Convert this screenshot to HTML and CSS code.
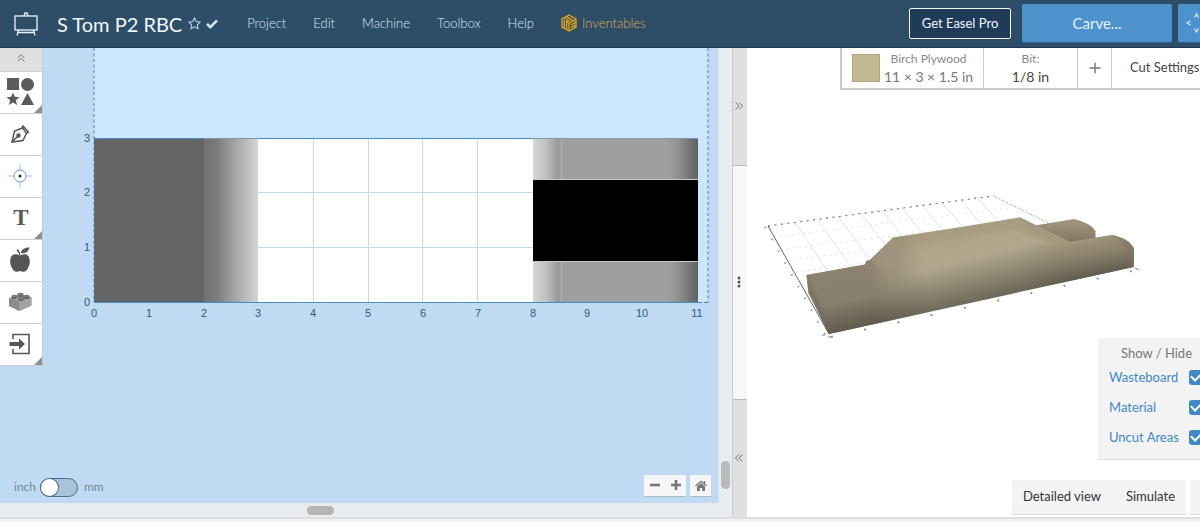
FILE: index.html
```html
<!DOCTYPE html>
<html lang="en">
<head>
<meta charset="utf-8">
<title>S Tom P2 RBC</title>
<link rel="stylesheet" href="styles.css">
</head>
<body>
<div class="app">
  <header class="topbar">
    <svg class="logo" viewBox="0 0 26 26" width="26" height="26" fill="none" stroke="#e8f4fc" stroke-width="1.3"><rect x="2" y="5" width="22" height="14"/><path d="M11 5l1-3h2l1 3M5.500 19L4 24.500M20.500 19l1.500 5.500M4.500 21.500h17"/></svg>
    <h1 class="title">S Tom P2 RBC</h1>
    <button class="icon-btn star" aria-label="Favorite"><svg viewBox="0 0 12 12" width="13" height="13" fill="none" stroke="#b9d3e8"><path d="M6 .9l1.600 3.300 3.600.5-2.600 2.500.6 3.600L6 9.100l-3.200 1.700.6-3.600L.8 4.700l3.600-.5z"/></svg></button>
    <svg class="saved" viewBox="0 0 12 10" width="12" height="10" fill="none" stroke="#d3e6f5" stroke-width="2.600"><path d="M1 4.800l3.300 3.300L11 1.300"/></svg>
    <nav class="menu">
      <button>Project</button><button>Edit</button><button>Machine</button><button>Toolbox</button><button>Help</button>
      <a href="#" class="brand"><svg viewBox="0 0 16 18" width="16" height="18" fill="none" stroke="#e0a21b" stroke-width="1.400"><path d="M8 1l7 4v8l-7 4-7-4V5zM8 9.500V17M8 9.500l7-4M3.300 6v7.500M5.600 6.500V15M8 9.500L5.600 6.500M3.300 4l6.500 3.500M5.600 2.600l6.500 3.700M10 11l5-2.800M10 13.600l5-2.800M8 17l7-4"/></svg>Inventables</a>
    </nav>
    <div class="actions">
      <button class="pro">Get Easel Pro</button>
      <button class="carve">Carve...</button>
      <button class="jog" aria-label="Jog machine"><svg viewBox="0 0 24 24" width="24" height="24" fill="none" stroke="#d8ecfb" stroke-width="1.200"><path d="M4.500 10L1 12l3.500 2M8.500 6.500l2-3.500 2 3.500M8.500 17.500l2 3.500 2-3.500M17 10l3.500 2-3.500 2"/></svg></button>
    </div>
  </header>
  <main class="panes">
    <section class="editor">
      <div class="canvas">
        <svg class="drawing" viewBox="0 48 718 455">
          <defs>
            <linearGradient id="ramp"><stop offset="0" stop-color="#707070"/><stop offset=".25" stop-color="#7d7d7d"/><stop offset=".5" stop-color="#9c9c9c"/><stop offset="1" stop-color="#d5d5d5"/></linearGradient>
            <linearGradient id="hood"><stop offset="0" stop-color="#d5d7d6"/><stop offset=".5" stop-color="#bdbfbe"/><stop offset=".9" stop-color="#969796"/><stop offset="1" stop-color="#a0a0a0"/></linearGradient>
            <linearGradient id="tail"><stop offset="0" stop-color="#9f9f9f"/><stop offset=".4" stop-color="#8b8c8a"/><stop offset="1" stop-color="#60625f"/></linearGradient>
          </defs>
          <rect x="94" y="48" width="614" height="254" fill="#cce6ff"/>
          <path d="M94 48v254M708 48v254" stroke="#6d9dc4" stroke-width="1.400" stroke-dasharray="3 2.500"/>
          <path d="M698 302.500h10" stroke="#4585b8" stroke-dasharray="4 2"/>
          <rect x="94" y="138" width="604" height="164" fill="#fff"/>
          <path d="M313.500 138v164M368.500 138v164M422.500 138v164M477.500 138v164M258 192.500h275M258 247.500h275" stroke="#c3dbec"/>
          <rect x="94" y="138" width="110" height="164" fill="#646464"/>
          <rect x="204" y="138" width="54" height="164" fill="url(#ramp)"/>
          <rect x="533" y="138" width="165" height="164" fill="#9f9f9f"/>
          <rect x="533" y="138" width="28" height="164" fill="url(#hood)"/>
          <path d="M561.500 138v164" stroke="#b3b3b3"/>
          <rect x="669" y="138" width="29" height="164" fill="url(#tail)"/>
          <path d="M533 179.500h165M533 261.500h165" stroke="#c9c9c9"/>
          <rect x="533" y="180" width="165" height="81"/>
          <path d="M94 138.500h110M258 138.500h275M94 302.500h604" stroke="#4e8cbd"/>
          <path d="M204 138.500h54M533 138.500h165" stroke="#8298a8"/>
          <path d="M94.500 138v164" stroke="#4a79a0" opacity=".7"/>
          <g class="ruler" text-anchor="end"><text x="90" y="142">3</text><text x="90" y="196">2</text><text x="90" y="251">1</text><text x="90" y="306">0</text></g>
          <g class="ruler" text-anchor="middle"><text x="94" y="317">0</text><text x="149" y="317">1</text><text x="204" y="317">2</text><text x="258" y="317">3</text><text x="313" y="317">4</text><text x="368" y="317">5</text><text x="423" y="317">6</text><text x="478" y="317">7</text><text x="533" y="317">8</text><text x="587" y="317">9</text><text x="642" y="317">10</text><text x="697" y="317">11</text></g>
        </svg>
        <div class="toolbar">
          <button class="collapse" aria-label="Collapse tools"><svg viewBox="0 0 8 8" width="8" height="8" fill="none" stroke="#777"><path d="M.5 4L4 .7 7.500 4M.5 7.500L4 4.200l3.500 3.300"/></svg></button>
          <button class="tool more" aria-label="Shapes"><svg viewBox="0 0 28 28" width="28" height="28" fill="#5a5a5a"><path d="M1 0h12v12H1z"/><circle cx="21.500" cy="6.500" r="6.500"/><path d="M7 14.500l1.900 4.300 4.600.4-3.600 3.100 1.200 4.700L7 24.400 2.900 27l1.200-4.700L.5 19.200l4.600-.4zM21.500 15L28 27H15z"/></svg></button>
          <button class="tool" aria-label="Pen"><svg viewBox="0 0 20 20" width="20" height="20" fill="none" stroke="#555" stroke-width="1.500"><path d="M2 18L4.500 7l8-3 4 5-3.500 7.500zM11.500 4.500L13 2l5.500 6-2.500 1.500M2.500 17.500L8 12"/><circle cx="8.500" cy="11.500" r="1.500" fill="#555"/></svg></button>
          <button class="tool" aria-label="Drill point"><svg viewBox="0 0 24 24" width="24" height="24" fill="none" stroke="#5d9bd3"><path d="M12 0v6M12 18v6M0 12h6M18 12h6" stroke="#a5c9e8"/><circle cx="12" cy="12" r="6"/><circle cx="12" cy="12" r="1.500" fill="#222" stroke="none"/></svg></button>
          <button class="tool more letter">T</button>
          <button class="tool" aria-label="Icon library"><svg viewBox="0 0 22 26" width="22" height="26" fill="#555"><path d="M10.500 8.500C8 7 5 6.800 3 8.800.5 11.500.7 17 3 21c2 4 4.500 4.500 8 3 3.500 1.500 6 1 8-3 2.300-4 2.500-9.500 0-12.200-2-2-5-1.800-7.500-.3L11 5.500 9 2 7.500 3l2 3z"/><path d="M12 6c0-3 3-5.500 8.500-5.500C19.500 4.500 16.500 7 12 6z"/></svg></button>
          <button class="tool" aria-label="Apps"><svg viewBox="0 0 24 20" width="24" height="20"><path d="M1 6l12-3.500L23.500 5v8.500L11.500 19 1 14z" fill="#b0b0b0"/><path d="M1 6l10.500 3V19L1 14z" fill="#8b8b8b"/><path d="M11.500 9l12-4v8.500l-12 5.500z" fill="#a3a3a3"/><g fill="#666"><path d="M3.500 4v1.500a3 1.500 0 006 0V4zM9.500 2v1.500a3 1.500 0 006 0V2zM10 6v1.200a3 1.500 0 006 0V6zM15.500 4v1.500a3 1.500 0 006 0V4z"/></g><g fill="#7b7b7b"><ellipse cx="6.500" cy="4" rx="3" ry="1.200"/><ellipse cx="12.500" cy="2" rx="3" ry="1.200"/><ellipse cx="13" cy="6" rx="3" ry="1.200"/><ellipse cx="18.500" cy="4" rx="3" ry="1.200"/></g></svg></button>
          <button class="tool more" aria-label="Import"><svg viewBox="0 0 22 22" width="22" height="22" fill="none" stroke="#555" stroke-width="1.600"><path d="M4 6V1.500h16v19H4V16"/><path d="M.5 9H10V5.500l6 5.500-6 5.500V13H.5z" fill="#555" stroke="none"/></svg></button>
        </div>
        <label class="units"><span>inch</span><input type="checkbox" role="switch"><span>mm</span></label>
        <div class="zoom">
          <div class="zoom-group">
            <button aria-label="Zoom out"><svg viewBox="0 0 12 12" width="12" height="12"><path d="M1 6h10" stroke="#777" stroke-width="2.600"/></svg></button>
            <button aria-label="Zoom in"><svg viewBox="0 0 12 12" width="12" height="12"><path d="M1 6h10M6 1v10" stroke="#777" stroke-width="2.600"/></svg></button>
          </div>
          <button class="home" aria-label="Reset view"><svg viewBox="0 0 12 11" width="12" height="11"><path d="M.5 6L6 1.300 11.500 6M9.500 1v3" fill="none" stroke="#777" stroke-width="1.400"/><path d="M2 6.500L6 3l4 3.500V11H7.200V8H4.800v3H2z" fill="#777"/></svg></button>
        </div>
      </div>
      <div class="vscroll"><span class="vthumb"></span></div>
      <div class="hscroll"><span class="hthumb"></span></div>
    </section>
    <div class="divider">
      <button class="side" aria-label="Expand editor"><svg viewBox="0 0 8 8" width="8" height="8" fill="none" stroke="#777"><path d="M.7.5L4 4 .7 7.500M4.200.5L7.500 4 4.200 7.500"/></svg></button>
      <button class="grip" aria-label="Resize panes"><svg viewBox="0 0 4 12" width="4" height="12" fill="#555"><circle cx="2" cy="2" r="1.500"/><circle cx="2" cy="6" r="1.500"/><circle cx="2" cy="10" r="1.500"/></svg></button>
      <button class="side" aria-label="Expand preview"><svg viewBox="0 0 8 8" width="8" height="8" fill="none" stroke="#777"><path d="M3.800.5L.5 4l3.300 3.500M7.300.5L4 4l3.300 3.500"/></svg></button>
    </div>
    <section class="preview">
      <svg class="scene" viewBox="747 48 453 469">
        <defs>
          <linearGradient id="side" gradientUnits="userSpaceOnUse" x1="948" y1="226" x2="968" y2="306"><stop offset="0" stop-color="#aa9e84"/><stop offset=".25" stop-color="#b0a58b"/><stop offset=".45" stop-color="#b0a78e"/><stop offset=".7" stop-color="#918974"/><stop offset="1" stop-color="#6a6556"/></linearGradient>
          <linearGradient id="deck" gradientUnits="userSpaceOnUse" x1="845" y1="268" x2="858" y2="326"><stop offset="0" stop-color="#8b826f"/><stop offset=".55" stop-color="#877e6b"/><stop offset="1" stop-color="#625d4f"/></linearGradient>
          <linearGradient id="leg" gradientUnits="userSpaceOnUse" x1="1090" y1="238" x2="1097" y2="275"><stop offset="0" stop-color="#9f947c"/><stop offset=".45" stop-color="#8b826d"/><stop offset="1" stop-color="#625d4f"/></linearGradient>
          <linearGradient id="rear" x1="0" y1="0" x2="0" y2="1"><stop offset="0" stop-color="#a2977e"/><stop offset="1" stop-color="#7f7661"/></linearGradient>
          <linearGradient id="deckfade" gradientUnits="userSpaceOnUse" x1="868" y1="284" x2="925" y2="270"><stop offset="0" stop-color="#fff"/><stop offset="1" stop-color="#fff" stop-opacity="0"/></linearGradient>
          <mask id="deckmask" maskUnits="userSpaceOnUse" x="790" y="210" width="160" height="140"><rect x="790" y="210" width="160" height="140" fill="url(#deckfade)"/></mask>
          <linearGradient id="legfade"><stop offset="0" stop-color="#fff" stop-opacity="0"/><stop offset=".6" stop-color="#fff"/></linearGradient>
          <mask id="legmask"><rect x="1025" y="200" width="85" height="100" fill="url(#legfade)"/><rect x="1110" y="200" width="60" height="100" fill="#fff"/></mask>
          <clipPath id="body"><path d="M806.500 275l58.500-10.500 1-3.500 4-1 23-22.500 62-9.500 65-10.700 50 24.700 42-7q18 4 22 14l-.5 18L829 334l-20.500-41z"/></clipPath>
          <filter id="slight"><feGaussianBlur stdDeviation="1.500"/></filter>
        </defs>
        <g fill="none" stroke="#dde3f2">
          <path d="M795 222l44 66M817 219l44 62M838 216l40 55M861 213l38 50M882 210l34 45M902 208l30 38M922 205l26 32M942 203l23 26M961 200l20 24M978 198l19 22"/>
          <path d="M774 237l234-29M781 249l240-28M788 260l240-28M796 272l90-12" stroke-dasharray="2 4"/>
        </g>
        <path d="M768 226l225-30" fill="none" stroke="#7a818d" stroke-width="1.300" stroke-dasharray="2 4.500"/>
        <path d="M993 196l56 27" fill="none" stroke="#929caa" stroke-dasharray="1.500 1.500"/>
        <path d="M768 226l61 108" fill="none" stroke="#566880"/>
        <path d="M765 227l61 109" fill="none" stroke="#979da6" stroke-width="2" stroke-dasharray="1.500 12"/>
        <path d="M831 337l306-67" fill="none" stroke="#8d949d" stroke-width="2" stroke-dasharray="2 32"/>
        <path d="M822 335h3M828 337h4M1135 268l4 2" stroke="#888"/>
        <path d="M1032 226l42-7q17 4 21.500 12v8l-27 5z" fill="url(#rear)"/>
        <g clip-path="url(#body)">
          <path d="M800 210h345v130H800z" fill="url(#side)"/>
          <path d="M893 237l127-20 51 24-30-2-30-10-110 18z" fill="#a4997f" opacity=".5" filter="url(#slight)"/>
          <path d="M1022 217l52 26-10 3q-20-4-38-18z" fill="#a09579" opacity=".6" filter="url(#slight)"/>
          <g mask="url(#legmask)"><path d="M1025 247l45-3 42-12 30 8v30l-117 25z" fill="url(#leg)"/></g>
          <path d="M1112 234q20 5 23 14v20l-6 2q1-25-17-36z" fill="#7d7560" opacity=".5" filter="url(#slight)"/>
          <g mask="url(#deckmask)"><path d="M800 225h140v115H800z" fill="url(#deck)"/></g>
          <path d="M870 260l23-23 13 14-20 26z" fill="#a09680" opacity=".6" filter="url(#slight)"/>
          <path d="M806 274l2.500 19 20.500 41 3-3z" fill="#6f6858" opacity=".5" filter="url(#slight)"/>
        </g>
      </svg>
      <div class="jobbar">
        <button class="material"><span class="swatch"></span><span class="stack"><small>Birch Plywood</small><span class="dims">11 × 3 × 1.5 in</span></span></button>
        <button class="bit"><small>Bit:</small><span>1/8 in</span></button>
        <button class="add" aria-label="Add bit"><svg viewBox="0 0 12 12" width="12" height="12"><path d="M.5 6h11M6 .5v11" stroke="#777" stroke-width="1.400"/></svg></button>
        <button class="cut">Cut Settings</button>
      </div>
      <fieldset class="layers">
        <legend>Show / Hide</legend>
        <label><span>Wasteboard</span><input type="checkbox" checked></label>
        <label><span>Material</span><input type="checkbox" checked></label>
        <label><span>Uncut Areas</span><input type="checkbox" checked></label>
      </fieldset>
      <div class="viewbar">
        <div class="view-group"><button>Detailed view</button><button>Simulate</button></div>
        <button class="view-menu" aria-label="More view options"></button>
      </div>
    </section>
  </main>
  <footer class="bottom"></footer>
</div>
</body>
</html>
```
FILE: styles.css
```css
* { box-sizing: border-box; }
body { margin: 0; font-family: Lato, "Liberation Sans", sans-serif; color: #444; }
button { font: inherit; color: inherit; border: 0; padding: 0; background: none; display: flex; align-items: center; justify-content: center; }
svg { display: block; }
.app { height: 100vh; display: flex; flex-direction: column; overflow: hidden; }

.topbar { height: 48px; flex: none; display: flex; align-items: center; padding-left: 13px; background: #2e4d67; border-bottom: 1px solid #1d3854; overflow: hidden; white-space: nowrap; }
.title { margin: 0 6px 0 18px; font-size: 20px; font-weight: 400; color: #f0f8ff; }
.star { margin-right: 5px; }
.menu { display: flex; align-items: center; gap: 27px; margin-left: 29px; padding-bottom: 1px; font-size: 13px; font-weight: 300; color: #d2e8fa; }
.brand { display: flex; align-items: center; gap: 5px; color: #d9ae5c; text-decoration: none; }
.actions { display: flex; align-items: center; margin-left: auto; margin-right: -22px; padding-bottom: 1px; }
.pro { width: 102px; height: 31px; border: 1px solid #eef7ff; border-radius: 2px; background: #1f3b57; color: #eef7ff; font-size: 13px; margin-right: 11px; }
.carve, .jog { height: 38px; background: #4e92cd; border-radius: 2px; color: #e4f2fd; box-shadow: 0 1px 0 #2d6596; }
.carve { width: 150px; font-size: 15px; margin-right: 6px; }
.jog { width: 44px; justify-content: flex-start; padding-left: 8px; }

.panes { flex: 1; min-height: 0; display: grid; grid-template-columns: 61% 15px minmax(0, 1fr); }
.editor { display: grid; grid-template: minmax(0, 1fr) 14px / minmax(0, 1fr) 14px; background: #e9ecef; }
.canvas { position: relative; overflow: hidden; background: #bfdaf2; }
.drawing, .scene { width: 100%; height: 100%; }
.ruler { font: 11px "Liberation Sans", sans-serif; fill: #3a5876; }

.toolbar { position: absolute; top: 0; left: 0; width: 43px; display: flex; flex-direction: column; border-right: 1px solid #c4ccd3; }
.collapse { height: 24px; background: #e0e0e0; border-bottom: 1px solid #ccc; }
.collapse svg { margin-bottom: 4px; }
.tool { position: relative; height: 42px; background: #fff; border-bottom: 1px solid #ccc; }
.tool svg { margin: 0 2px 2px 0; }
.more::after { content: ""; position: absolute; right: 0; bottom: 0; border: 4px solid #8f8f8f; border-top-color: transparent; border-left-color: transparent; }
.letter { font: bold 23px "Liberation Serif", serif; color: #5a5a5a; padding-bottom: 2px; }

.units { position: absolute; left: 14px; bottom: 6px; display: flex; align-items: center; gap: 6px; font-size: 12px; line-height: 16px; color: #74889a; }
.units span { padding-bottom: 2px; }
.units input { appearance: none; margin: 0; width: 38px; height: 19px; border: 1px solid #526c85; border-radius: 10px; background: #a9c4da; }
.units span:first-child { width: 20px; }
.units input::before { content: ""; display: block; width: 17px; height: 17px; border-radius: 50%; background: #fff; box-shadow: 0 0 0 1px #526c85; }
.zoom { position: absolute; right: 7px; bottom: 7px; display: flex; gap: 4px; }
.zoom-group, .home { height: 21px; background: #f6f6f6; box-shadow: 0 1px 0 #a8b8c6; }
.zoom-group { display: flex; width: 42px; }
.zoom-group button { flex: 1; padding-bottom: 2px; }
.home { width: 21px; }

.vscroll { border-left: 1px solid #d5dfe6; display: flex; justify-content: center; align-items: flex-end; padding-bottom: 14px; }
.vthumb { width: 9px; height: 28px; border-radius: 5px; background: #b8babc; }
.hscroll { grid-column: 1 / -1; display: flex; align-items: center; padding-left: 42%; }
.hthumb { width: 27px; height: 9px; border-radius: 5px; background: #b3b5b7; }

.divider { display: grid; grid-template-rows: 117fr 235fr 117fr; border-left: 1px solid #ccc; }
.divider svg { margin: 0 2px 2px 0; }
.side { background: #e0e0e0; }
.grip { background: #f7f7f7; border: solid #bbb; border-width: 1px 0; }

.preview { position: relative; overflow: hidden; background: #fff; white-space: nowrap; }
.jobbar { position: absolute; top: 0; right: -30px; height: 42px; display: flex; background: #fff; border: solid #ccc; border-width: 0 0 2px 2px; }
.jobbar button { border-right: 1px solid #ccc; }
.jobbar small { font-size: 12px; line-height: 18px; color: #888; }
.material { width: 142px; gap: 4px; font-size: 14px; line-height: 18px; color: #777; }
.swatch { width: 28px; height: 28px; background: #c3b892; border: 1px solid #b0a680; }
.stack { display: flex; flex-direction: column; align-items: center; }
.bit { width: 94px; flex-direction: column; font-size: 14px; line-height: 18px; }
.add { width: 34px; }
.jobbar .cut { width: 118px; justify-content: flex-start; padding: 0 0 2px 18px; font-size: 13px; border-right: 0; }

.layers { position: absolute; right: -15px; bottom: 57px; width: 117px; height: 122px; margin: 0; padding: 0 11px; border: 0; background: #f3f3f3; border-bottom: 1px solid #ddd; font-size: 13px; color: #4089c7; }
.layers legend { float: left; width: 100%; padding: 0; text-align: center; line-height: 30px; color: #777; }
.layers label { clear: both; display: flex; align-items: center; justify-content: space-between; height: 18px; margin-bottom: 12px; }
.layers input { appearance: none; margin: 0; width: 15px; height: 15px; border-radius: 3px; background: #4089c7; display: flex; align-items: center; justify-content: center; }
.layers input::before { content: ""; width: 9px; height: 5px; margin-bottom: 3px; border: solid #fff; border-width: 0 0 2px 2px; transform: rotate(-45deg); }

.viewbar { position: absolute; right: -24px; bottom: 2px; display: flex; gap: 4px; font-size: 13px; color: #333; }
.view-group { display: flex; width: 174px; height: 35px; padding: 0 11px 2px; justify-content: space-between; }
.view-group, .view-menu { background: #f4f4f4; border-bottom: 1px solid #ddd; }
.view-menu { width: 34px; }
.bottom { flex: none; height: 5px; background: #f1f1f1; border-top: 2px solid #dedede; }
```
